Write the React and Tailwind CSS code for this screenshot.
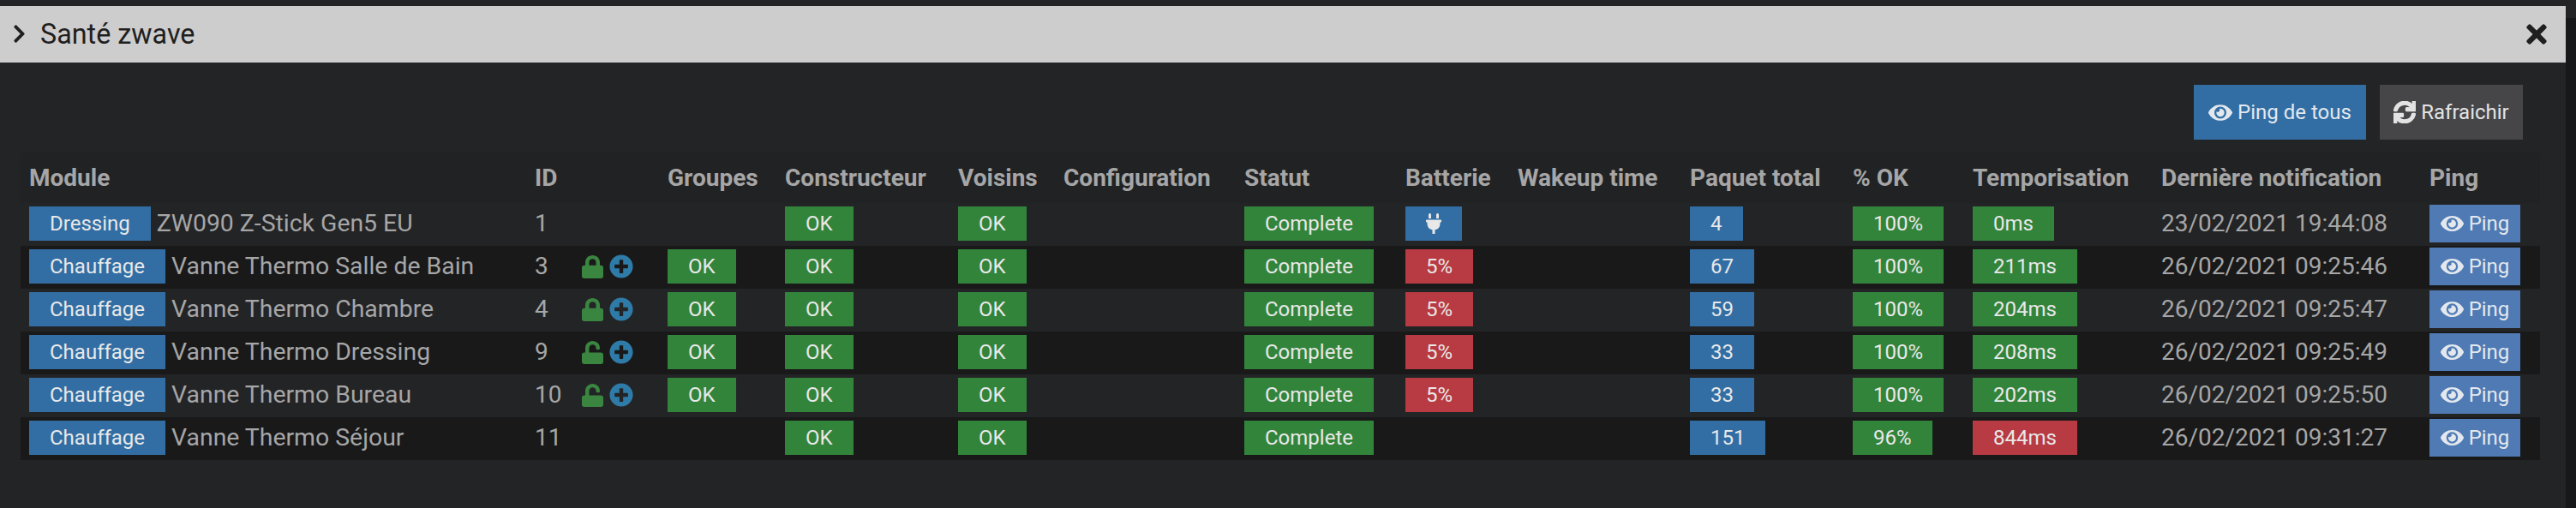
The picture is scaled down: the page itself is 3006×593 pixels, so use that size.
import React from "react";
import { FaChevronRight, FaTimes, FaEye, FaSync, FaLock, FaUnlock, FaPlusCircle, FaPlug } from "react-icons/fa";

const cols = [590, 155, 137, 202, 123, 211, 188, 131, 201, 190, 140, 220, 313, 139];
const heads = ["Module", "ID", "Groupes", "Constructeur", "Voisins", "Configuration", "Statut", "Batterie", "Wakeup time", "Paquet total", "% OK", "Temporisation", "Dernière notification", "Ping"];

const rows = [
  { obj: "Dressing", name: "ZW090 Z-Stick Gen5 EU", id: 1, groups: false, batt: null, plug: true, pk: 4, ok: "100%", tempo: "0ms", date: "23/02/2021 19:44:08" },
  { obj: "Chauffage", name: "Vanne Thermo Salle de Bain", id: 3, lock: true, groups: true, batt: "5%", pk: 67, ok: "100%", tempo: "211ms", date: "26/02/2021 09:25:46" },
  { obj: "Chauffage", name: "Vanne Thermo Chambre", id: 4, lock: true, groups: true, batt: "5%", pk: 59, ok: "100%", tempo: "204ms", date: "26/02/2021 09:25:47" },
  { obj: "Chauffage", name: "Vanne Thermo Dressing", id: 9, unlock: true, groups: true, batt: "5%", pk: 33, ok: "100%", tempo: "208ms", date: "26/02/2021 09:25:49" },
  { obj: "Chauffage", name: "Vanne Thermo Bureau", id: 10, unlock: true, groups: true, batt: "5%", pk: 33, ok: "100%", tempo: "202ms", date: "26/02/2021 09:25:50" },
  { obj: "Chauffage", name: "Vanne Thermo Séjour", id: 11, groups: false, batt: null, pk: 151, ok: "96%", tempo: "844ms", slow: true, date: "26/02/2021 09:31:27" },
];

function Badge({ color, children }) {
  return (
    <span className={`inline-flex h-[40px] items-center justify-center px-[24px] text-[24px] leading-none text-[#e8e8e8] ${color}`}>
      {children}
    </span>
  );
}

const green = "bg-[#33843b]";
const blue = "bg-[#326ea4]";
const red = "bg-[#b83a42]";
const td = "pl-[10px] pt-[4px] pb-[6px] align-top overflow-visible whitespace-nowrap";

export default function App() {
  return (
    <div className="flex h-[593px] w-[3006px] overflow-hidden bg-[#232426] font-['Roboto',sans-serif] text-[#a6a6a6]">
      <div className="w-[2994px] pt-[7px]">
        <div className="flex h-[66px] items-center justify-between bg-[#cdcdcd] pl-[15px] pr-[22px] text-[#1f1f1f]">
          <div className="flex items-center">
            <FaChevronRight className="h-[25px] w-[15px]" />
            <span className="ml-[17px] text-[32.3px] leading-none">Santé zwave</span>
          </div>
          <FaTimes className="h-[34px] w-[24px]" />
        </div>

        <div className="mt-[26px] flex justify-end gap-[16px] pr-[50px]">
          <button className="flex h-[64px] w-[201px] items-center justify-center gap-[6px] bg-[#326ea4] text-[24px] text-[#e3e8ee]">
            <FaEye className="h-[25px] w-[28px]" />
            Ping de tous
          </button>
          <button className="flex h-[64px] w-[167px] items-center justify-center gap-[6px] bg-[#464648] text-[24px] text-[#e3e3e3]">
            <FaSync stroke="currentColor" strokeWidth={30} className="h-[26px] w-[26px]" />
            Rafraichir
          </button>
        </div>

        <table className="ml-[24px] mt-[15px] w-[2940px] table-fixed border-collapse">
          <colgroup>
            {cols.map((w, i) => (
              <col key={i} style={{ width: w }} />
            ))}
          </colgroup>
          <thead>
            <tr className="h-[59px] bg-[#212224]">
              {heads.map((h) => (
                <th key={h} className="whitespace-nowrap pl-[10px] text-left text-[28px] font-bold leading-none text-[#a6a6a6]">
                  {h}
                </th>
              ))}
            </tr>
          </thead>
          <tbody>
            {rows.map((r, i) => (
              <tr key={r.id} className={`h-[50px] ${i % 2 === 1 || i === 5 ? "bg-[#19191a]" : "bg-[#232426]"}`}>
                <td className={td}>
                  <div className="flex items-center">
                    <Badge color={blue}>{r.obj}</Badge>
                    <span className="ml-[7px] text-[28.4px] leading-none">{r.name}</span>
                  </div>
                </td>
                <td className={td}>
                  <div className="flex h-[40px] items-center text-[28px] leading-none">
                    <span className="w-[55px]">{r.id}</span>
                    {(r.lock || r.unlock) && (
                      <span className="flex items-center gap-[7px]">
                        {r.lock ? (
                          <FaLock preserveAspectRatio="none" className="h-[27px] w-[25px] text-[#3a8540]" />
                        ) : (
                          <FaUnlock preserveAspectRatio="none" className="h-[27px] w-[25px] text-[#3a8540]" />
                        )}
                        <FaPlusCircle className="h-[28px] w-[28px] text-[#2f7ba8]" />
                      </span>
                    )}
                  </div>
                </td>
                <td className={td}>{r.groups && <Badge color={green}>OK</Badge>}</td>
                <td className={td}><Badge color={green}>OK</Badge></td>
                <td className={td}><Badge color={green}>OK</Badge></td>
                <td className={td}></td>
                <td className={td}><Badge color={green}>Complete</Badge></td>
                <td className={td}>
                  {r.plug ? (
                    <span className={`inline-flex h-[40px] w-[66px] items-center justify-center ${blue} text-[#e8e8e8]`}>
                      <FaPlug className="h-[24px] w-[20px]" />
                    </span>
                  ) : r.batt ? (
                    <Badge color={red}>{r.batt}</Badge>
                  ) : null}
                </td>
                <td className={td}></td>
                <td className={td}><Badge color={blue}>{r.pk}</Badge></td>
                <td className={td}><Badge color={green}>{r.ok}</Badge></td>
                <td className={td}><Badge color={r.slow ? red : green}>{r.tempo}</Badge></td>
                <td className={td}>
                  <div className="flex h-[40px] items-center text-[28px] leading-none">{r.date}</div>
                </td>
                <td className={td}>
                  <button className="-mt-[2px] -mb-[2px] flex h-[44px] w-[106px] items-center justify-center gap-[6px] bg-[#4f7ab3] text-[24px] text-[#e3e8ee]">
                    <FaEye className="h-[24px] w-[27px]" />
                    Ping
                  </button>
                </td>
              </tr>
            ))}
          </tbody>
        </table>
      </div>
      <div className="flex w-[12px] flex-col">
        <div className="h-[21px] bg-[#232426]"></div>
        <div className="flex-1 bg-[#17181a]"></div>
      </div>
    </div>
  );
}
